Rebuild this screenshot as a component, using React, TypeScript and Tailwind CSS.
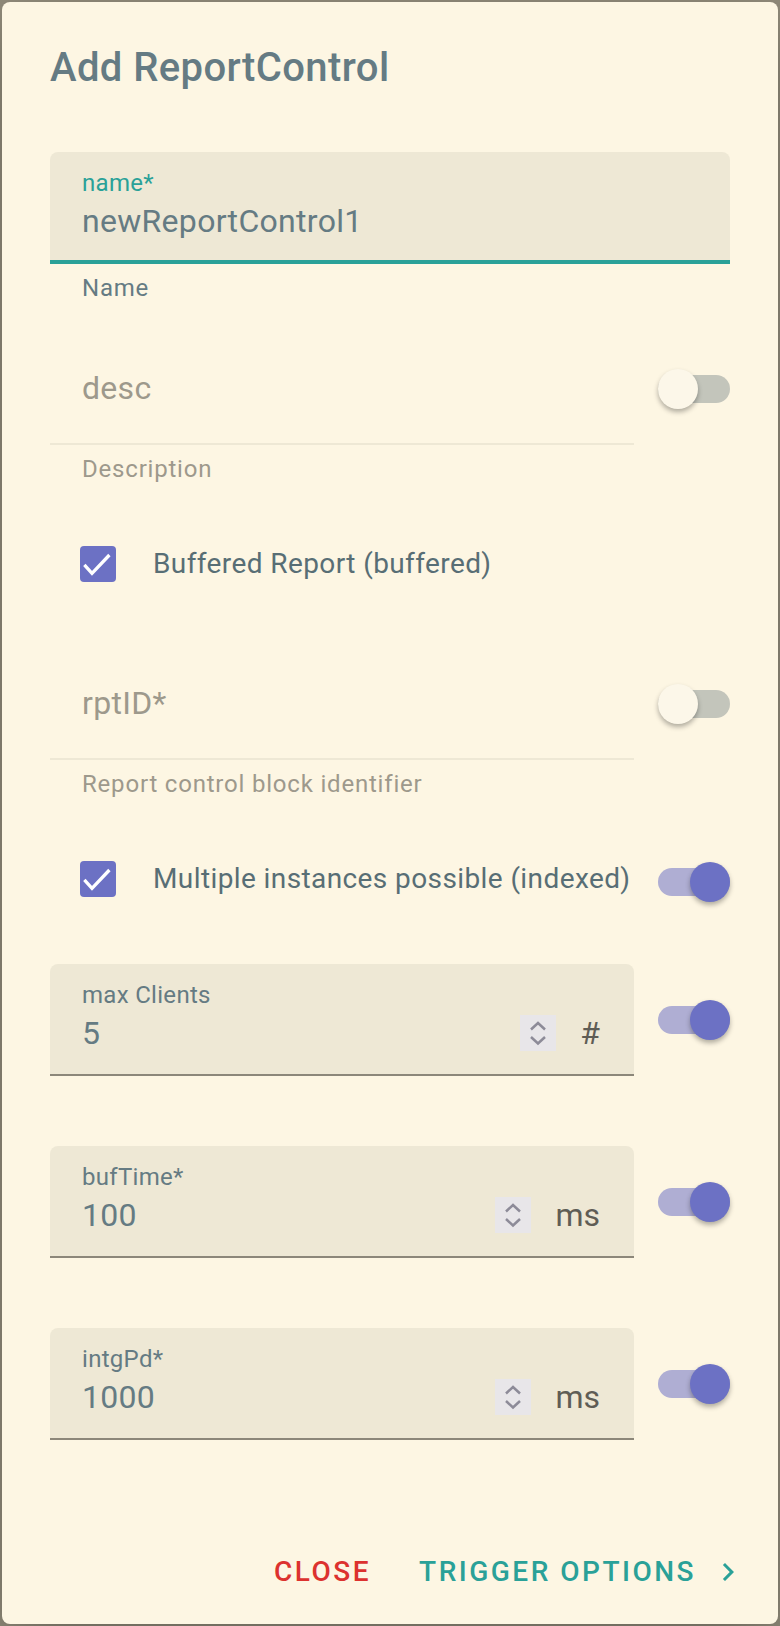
import React from "react";

const FONT = "font-['Roboto',sans-serif]";

function Switch({ on }: { on: boolean }) {
  return (
    <div className="relative h-[28px] w-[72px]">
      <div className={on ? "h-full w-full rounded-full bg-[#afaed3]" : "h-full w-full rounded-full bg-[#c3c5bb]"} />
      <div
        className={
          on
            ? "absolute right-0 top-[-6px] h-[40px] w-[40px] rounded-full bg-[#6c71c4] shadow-[0_3px_5px_rgba(0,0,0,0.3)]"
            : "absolute left-0 top-[-6px] h-[40px] w-[40px] rounded-full bg-[#fcf7e9] shadow-[0_3px_5px_rgba(0,0,0,0.3)]"
        }
      />
    </div>
  );
}

function Spinner() {
  return (
    <svg width="36" height="36" viewBox="0 0 36 36" className="shrink-0">
      <rect width="36" height="36" fill="#e8e6e9" />
      <path d="M11 14.5L18 8L25 14.5" fill="none" stroke="#8d8b98" strokeWidth="2.5" />
      <path d="M11 22L18 28.5L25 22" fill="none" stroke="#8d8b98" strokeWidth="2.5" />
    </svg>
  );
}

function Helper({ text, disabled }: { text?: string; disabled?: boolean }) {
  return (
    <div
      className={
        "mt-[8px] h-[32px] px-[32px] text-[24px] leading-[32px] tracking-[0.8px] " +
        (disabled ? "text-[#9d998c]" : "text-[#657b83]")
      }
    >
      {text}
    </div>
  );
}

interface FieldProps {
  label: string;
  value?: string;
  helper?: string;
  focused?: boolean;
  disabled?: boolean;
  suffix?: string;
}

function TextField({ label, value, helper, focused, disabled, suffix }: FieldProps) {
  if (disabled) {
    return (
      <div>
        <div className="flex h-[112px] items-center border-b-2 border-[#eee8d5] px-[32px]">
          <span className="text-[32px] leading-[40px] tracking-[0.3px] text-[#9d998c]">{label}</span>
        </div>
        <Helper text={helper} disabled />
      </div>
    );
  }

  return (
    <div>
      <div
        className={
          "h-[112px] rounded-t-[8px] bg-[#eee8d5] pl-[32px] pr-[34px] pt-[19px] " +
          (focused ? "border-b-4 border-[#2aa198]" : "border-b-2 border-[#8c877a]")
        }
      >
        <div
          className={
            "h-[24px] text-[24px] leading-[24px] tracking-[0.3px] " + (focused ? "text-[#2aa198]" : "text-[#657b83]")
          }
        >
          {label}
        </div>
        <div className="mt-[6px] flex h-[40px] items-center">
          <span className="flex-1 text-[32px] leading-[40px] tracking-[0.3px] text-[#657b83]">{value}</span>
          {suffix && (
            <>
              <Spinner />
              <span className="ml-[24px] text-[32px] leading-[40px] text-[#5f5d55]">{suffix}</span>
            </>
          )}
        </div>
      </div>
      <Helper text={helper} />
    </div>
  );
}

function SwitchRow({ on, children, className }: { on: boolean; children: React.ReactNode; className?: string }) {
  return (
    <div className={"flex " + (className ?? "")}>
      <div className="min-w-0 flex-1">{children}</div>
      <div className="flex h-[112px] w-[96px] items-center justify-end">
        <Switch on={on} />
      </div>
    </div>
  );
}

function CheckRow({ label, switchOn, className }: { label: string; switchOn?: boolean; className?: string }) {
  return (
    <div className={"flex h-[80px] items-center " + (className ?? "")}>
      <div className="ml-[30px] flex h-[36px] w-[36px] shrink-0 items-center justify-center rounded-[4px] bg-[#6c71c4]">
        <svg width="36" height="36" viewBox="0 0 24 24">
          <path d="M2.9 12.6L8 18.2L19.6 6" fill="none" stroke="#fff" strokeWidth="2.2" />
        </svg>
      </div>
      <span className="ml-[37px] flex-1 whitespace-nowrap text-[28px] leading-[40px] tracking-[0.4px] text-[#586e75]">
        {label}
      </span>
      {switchOn !== undefined && (
        <div className="mt-[6px] flex w-[96px] justify-end">
          <Switch on={switchOn} />
        </div>
      )}
    </div>
  );
}

export default function App() {
  return (
    <div className={"h-[1626px] w-[780px] bg-[#938d7c] p-[2px] " + FONT}>
      <div className="flex h-full flex-col rounded-[8px] bg-[#fdf6e3] shadow-[0_22px_70px_rgba(0,0,0,0.3)]">
        <div className="px-[48px] pt-[34px]">
          <h2 className="h-[64px] text-[40px] font-medium leading-[64px] tracking-[0.4px] text-[#657b83]">
            Add ReportControl
          </h2>

          <div className="mt-[52px]">
            <TextField label="name*" value="newReportControl1" helper="Name" focused />
          </div>

          <SwitchRow on={false} className="mt-[29px]">
            <TextField label="desc" helper="Description" disabled />
          </SwitchRow>

          <CheckRow label="Buffered Report (buffered)" className="mt-[39px]" />

          <SwitchRow on={false} className="mt-[44px]">
            <TextField label="rptID*" helper="Report control block identifier" disabled />
          </SwitchRow>

          <CheckRow label="Multiple instances possible (indexed)" switchOn className="mt-[39px]" />

          <SwitchRow on className="mt-[45px]">
            <TextField label="max Clients" value="5" suffix="#" />
          </SwitchRow>

          <SwitchRow on className="mt-[30px]">
            <TextField label="bufTime*" value="100" suffix="ms" />
          </SwitchRow>

          <SwitchRow on className="mt-[30px]">
            <TextField label="intgPd*" value="1000" suffix="ms" />
          </SwitchRow>
        </div>

        <div className="mt-auto flex justify-end pb-[16px] pr-[16px]">
          <button
            type="button"
            className="flex h-[72px] items-center px-[16px] text-[28px] font-medium uppercase tracking-[2.5px] text-[#dc322f]"
          >
            Close
          </button>
          <button
            type="button"
            className="ml-[16px] flex h-[72px] items-center px-[16px] text-[28px] font-medium uppercase tracking-[2.5px] text-[#2aa198]"
          >
            Trigger options
            <svg width="36" height="36" viewBox="0 0 24 24" className="ml-[14px]">
              <path d="M10 6L8.59 7.41 13.17 12l-4.58 4.59L10 18l6-6z" fill="#2aa198" />
            </svg>
          </button>
        </div>
      </div>
    </div>
  );
}
